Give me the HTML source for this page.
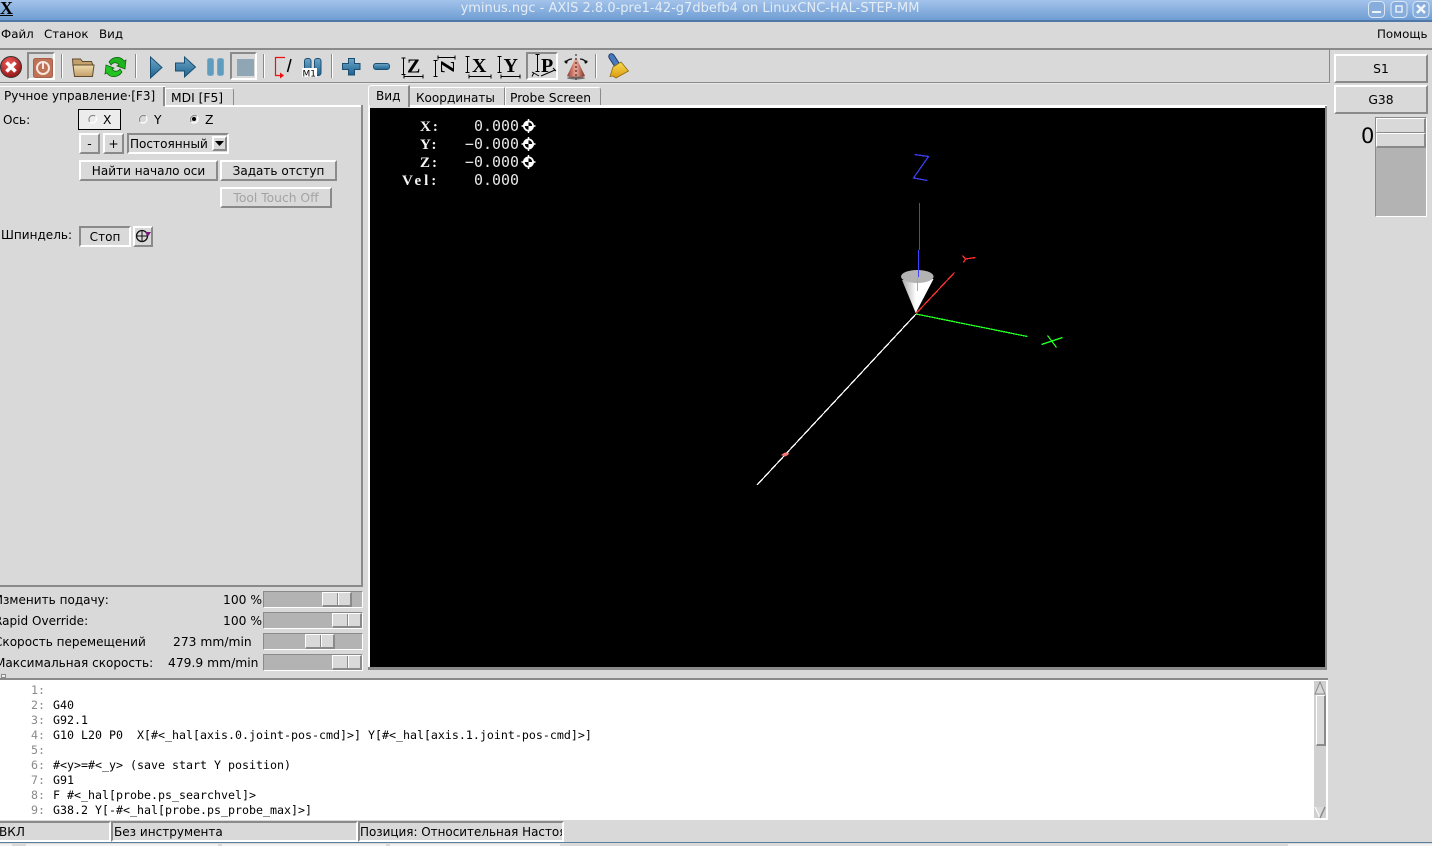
<!DOCTYPE html>
<html><head><meta charset="utf-8"><style>
html,body{margin:0;padding:0;width:1432px;height:846px;overflow:hidden;background:#d9d9d9}
body{position:relative;font-family:"DejaVu Sans","Liberation Sans",sans-serif;font-size:12.05px;color:#000}
.a{position:absolute;box-sizing:border-box}
.t{position:absolute;white-space:pre;line-height:16px;height:16px}
.l{font-size:12.3px}
.m{font-size:11.85px}
.r{position:absolute;box-sizing:border-box;border:2px solid;border-color:#fff #8a8a8a #8a8a8a #fff;background:#d9d9d9;text-align:center;white-space:pre}
.s{position:absolute;box-sizing:border-box;border:2px solid;border-color:#8a8a8a #fff #fff #8a8a8a;background:#d9d9d9;white-space:pre}
.tr{position:absolute;box-sizing:border-box;border:1px solid;border-color:#8a8a8a #fff #fff #8a8a8a;background:#b3b3b3}
.th{position:absolute;box-sizing:border-box;top:0;height:15px;width:30px;background:linear-gradient(90deg,#d9d9d9 0,#d9d9d9 14px,#8a8a8a 14px,#8a8a8a 15px,#fff 15px,#fff 16px,#d9d9d9 16px);border:1px solid;border-color:#fff #8a8a8a #8a8a8a #fff;border-width:1px 2px 2px 1px}
.code{position:absolute;left:0;font-family:"DejaVu Sans Mono","Liberation Mono",monospace;font-size:11.63px;line-height:15px;height:15px;white-space:pre}
.hud{position:absolute;font-family:"Liberation Serif",serif;font-weight:bold;font-size:15px;line-height:18px;color:#f4f4f4;white-space:pre;letter-spacing:2px}
.val{position:absolute;font-family:"DejaVu Sans Mono",monospace;font-size:14.95px;line-height:18px;color:#e8e8e8;white-space:pre;text-align:right;width:90px;left:429px}
svg{position:absolute;overflow:visible}
</style></head><body>

<!-- Title bar -->
<div class="a" style="left:0;top:0;width:1432px;height:20px;background:linear-gradient(#a3c3ea,#6f9dd3)"></div>
<div class="a" style="left:0;top:20px;width:1432px;height:2px;background:#4f77a8"></div>
<div class="t" style="left:0;top:0;font:bold 18px/17px 'Liberation Serif',serif;text-decoration:underline;height:18px">X</div>
<div class="t" style="left:440px;top:1px;width:500px;color:#e4ecf5;font-size:13px;text-align:center">yminus.ngc - AXIS 2.8.0-pre1-42-g7dbefb4 on LinuxCNC-HAL-STEP-MM</div>
<svg style="left:0;top:0" width="1432" height="22">
<g fill="#86addb" stroke="#dbe7f5" stroke-width="1">
<rect x="1368.5" y="1.5" width="16" height="16" rx="4"/><rect x="1391" y="1.5" width="16" height="16" rx="4"/><rect x="1413" y="1.5" width="16" height="16" rx="4"/></g>
<rect x="1372" y="11" width="9" height="2" fill="#eef4fb"/>
<rect x="1396" y="6" width="6" height="6" fill="none" stroke="#eef4fb" stroke-width="1.4"/>
<path d="M1417 5l8 8M1425 5l-8 8" stroke="#f2f6fb" stroke-width="2.6"/>
</svg>

<!-- Menu -->
<div class="t m" style="left:1px;top:26px">Файл</div>
<div class="t m" style="left:44px;top:26px">Станок</div>
<div class="t m" style="left:99px;top:26px">Вид</div>
<div class="t m" style="left:1377px;top:26px">Помощь</div>
<div class="a" style="left:0;top:48px;width:1432px;height:2px;background:#8a8a8a"></div>
<div class="a" style="left:0;top:50px;width:1330px;height:33px;border-right:1px solid #8a8a8a;border-bottom:1px solid #8a8a8a"></div>
<div class="a" style="left:0;top:83px;width:1330px;height:1px;background:#fff;opacity:.4"></div>

<!-- Toolbar sunken -->
<div class="s" style="left:27px;top:52px;width:28px;height:28px"></div>
<div class="s" style="left:230px;top:52px;width:27px;height:28px"></div>
<div class="s" style="left:526px;top:52px;width:32px;height:28px"></div>

<svg style="left:0;top:0" width="1432" height="90">
<defs>
<linearGradient id="b" x1="0" y1="0" x2="0" y2="1"><stop offset="0" stop-color="#6ea6c8"/><stop offset="1" stop-color="#1d6390"/></linearGradient>
<radialGradient id="rd" cx=".4" cy=".3" r=".8"><stop offset="0" stop-color="#f05a5a"/><stop offset="1" stop-color="#8a0d0d"/></radialGradient>
<linearGradient id="fo" x1="0" y1="0" x2="0" y2="1"><stop offset="0" stop-color="#f0dcae"/><stop offset="1" stop-color="#c49e68"/></linearGradient>
<linearGradient id="co" x1="0" y1="0" x2="1" y2="0"><stop offset="0" stop-color="#8f3a30"/><stop offset=".5" stop-color="#f2a898"/><stop offset="1" stop-color="#7a2e26"/></linearGradient>
<linearGradient id="by" x1="0" y1="0" x2="0" y2="1"><stop offset="0" stop-color="#f8dc50"/><stop offset="1" stop-color="#dc9a10"/></linearGradient>
</defs>
<!-- separators -->
<g fill="#8a8a8a"><rect x="61" y="54" width="1" height="24"/><rect x="135" y="54" width="1" height="24"/><rect x="263" y="54" width="1" height="24"/><rect x="331" y="54" width="1" height="24"/><rect x="595" y="54" width="1" height="24"/></g>
<g fill="#fff"><rect x="62" y="54" width="1" height="24"/><rect x="136" y="54" width="1" height="24"/><rect x="264" y="54" width="1" height="24"/><rect x="332" y="54" width="1" height="24"/><rect x="596" y="54" width="1" height="24"/></g>
<!-- estop -->
<circle cx="11" cy="67" r="10.5" fill="url(#rd)" stroke="#333" stroke-width="1"/>
<path d="M6.5 62.5l9 9M15.5 62.5l-9 9" stroke="#fff" stroke-width="3.6"/>
<!-- power -->
<rect x="33.500" y="58.500" width="19" height="19" rx="2" fill="#bf7255" stroke="#a86048"/>
<circle cx="43" cy="68" r="6" fill="none" stroke="#f6e8e0" stroke-width="2"/>
<rect x="42" y="62" width="2" height="7" fill="#f6e8e0"/>
<!-- folder -->
<path d="M72.5 59h8l2 2.500h9l1.500 4H73z" fill="#c4a06a" stroke="#5e4c30"/>
<path d="M73 65h21l-1.500 11.500H74.500z" fill="url(#fo)" stroke="#5e4c30"/>
<!-- reload -->
<path d="M109 62c4-6 12-6 15-1l2-1-1 9-8-3 2-1c-2-3-6-3-8 0z" fill="#1fb41f" stroke="#0b5b0b" stroke-width=".7"/>
<path d="M122 72c-4 6-12 6-15 1l-2 1 1-9 8 3-2 1c2 3 6 3 8 0z" fill="#22c422" stroke="#0b5b0b" stroke-width=".7"/>
<!-- run -->
<path d="M150.5 57l11.5 10.5-11.500 10.500z" fill="url(#b)" stroke="#1b4f72"/>
<!-- step -->
<path d="M175.5 63h9v-6l11 10-11 10v-6h-9z" fill="url(#b)" stroke="#1b4f72"/>
<!-- pause -->
<rect x="207.5" y="58.5" width="6" height="17" rx="2" fill="#5f9cbe" stroke="#7aa9c4"/>
<rect x="217.5" y="58.5" width="6" height="17" rx="2" fill="#5f9cbe" stroke="#7aa9c4"/>
<!-- stop -->
<rect x="237" y="59" width="17" height="17" fill="#8fa6b4"/>
<!-- touch-off run-from -->
<path d="M285 57.500h-9.500v18h8" fill="none" stroke="#f01010" stroke-width="1.200"/>
<path d="M280 72.500l4 3-4 3z" fill="#f01010"/>
<path d="M291 59l-3.500 13" stroke="#000" stroke-width="1.500"/>
<!-- M1 -->
<rect x="304.500" y="58.500" width="6.500" height="17" rx="2.500" fill="url(#b)" stroke="#1b4f72"/>
<rect x="314.500" y="58.500" width="6.500" height="17" rx="2.500" fill="url(#b)" stroke="#1b4f72"/>
<rect x="302" y="68" width="15" height="9" fill="#fff"/>
<text x="302.500" y="76.500" font-family="DejaVu Sans" font-size="9" fill="#000">M1</text>
<!-- plus / minus -->
<path d="M348.500 58.500h6v5h5.500v6h-5.500v5.500h-6v-5.500h-6v-6h6z" fill="url(#b)" stroke="#1b4f72"/>
<rect x="373.500" y="63.500" width="16" height="6" rx="2.500" fill="url(#b)" stroke="#1b4f72"/>
<!-- view brackets -->
<g stroke="#000" fill="none" stroke-width="1">
<path d="M403.500 58v17M401.500 58h4M401.500 74.500h4M404 76.500h19M404 74.500v4M423 74.500v4"/>
<path d="M435.500 60v17M433.500 60.500h4M433.500 76.500h4M438 57.500h17M438 55.500v4M455 55.500v4"/>
<path d="M467.500 56v17M465.500 56.500h4M465.500 72.500h4M469 76.500h22M469 74.500v4M491 74.500v4"/>
<path d="M499.500 56v17M497.500 56.500h4M497.500 72.500h4M501 76.500h19M501 74.500v4M520 74.500v4"/>
<path d="M537.500 54v18M535.500 54.500h4M535.500 71.500h4M532 72l7 4M532 76.500l2-4M541 76l14-6M553 68l3 3"/>
</g>
<text x="407" y="72.500" font-family="Liberation Serif" font-weight="bold" font-size="20">Z</text>
<text x="0" y="0" transform="translate(440 60.500) rotate(90) translate(0 -1) scale(1 1.050)" font-family="Liberation Serif" font-weight="bold" font-size="19">Z</text>
<text x="472" y="72" font-family="Liberation Serif" font-weight="bold" font-size="20">X</text>
<text x="503.500" y="72" font-family="Liberation Serif" font-weight="bold" font-size="20">Y</text>
<text x="541" y="72" font-family="Liberation Serif" font-weight="bold" font-size="20">P</text>
<!-- cone -->
<path d="M576 57l-9 19q9 4 18 0z" fill="url(#co)"/>
<path d="M565 63q3-4 7-4M587 63q-3-4-7-4" stroke="#111" fill="none" stroke-width="1.200"/>
<path d="M564 61l3 3 1-4zM588 61l-3 3-1-4z" fill="#111"/>
<path d="M576 54v26" stroke="#111" stroke-width="1" stroke-dasharray="2 2"/>
<ellipse cx="576" cy="78" rx="9" ry="1.500" fill="#444" opacity=".7"/>
<!-- sweep -->
<path d="M611.500 56.500L618 66.500" stroke="#1e3a6a" stroke-width="6.500" stroke-linecap="round"/>
<path d="M611.500 56.500L618 66.500" stroke="#4a78bc" stroke-width="4.500" stroke-linecap="round"/>
<path d="M613 67l8-5 7.500 9-12.500 7-3-2-3 .5z" fill="url(#by)" stroke="#8a6a10" stroke-width=".8"/>
</svg>

<!-- Left tabs -->
<div class="a" style="left:0;top:86px;width:165px;height:21px;background:#d9d9d9;border-top:1px solid #fff"></div>
<div class="a" style="left:163px;top:87px;width:2px;height:19px;background:#8a8a8a"></div>
<div class="t" style="left:4px;top:88px">Ручное управление·[F3]</div>
<div class="a" style="left:165px;top:88px;width:69px;height:18px;border-top:1px solid #fff;border-left:1px solid #fff;border-right:1px solid #8a8a8a;border-top-right-radius:3px"></div>
<div class="t l" style="left:171px;top:90px">MDI [F5]</div>
<div class="a" style="left:165px;top:105px;width:198px;height:2px;background:#fff"></div>
<div class="a" style="left:361px;top:105px;width:2px;height:482px;background:#8a8a8a"></div>
<div class="a" style="left:0;top:585px;width:363px;height:2px;background:#8a8a8a"></div>

<!-- Axis -->
<div class="t" style="left:3px;top:112px;font-size:12px">Ось:</div>
<div class="a" style="left:78px;top:109px;width:43px;height:21px;background:#ececec;border:1px solid #000"></div>
<svg style="left:0;top:0" width="240" height="130">
<g fill="none" stroke-width="1.200">
<circle cx="92.500" cy="119" r="4" stroke="#fff"/><path d="M89.700 121.800a4 4 0 0 1 5.600-5.600" stroke="#8a8a8a"/>
<circle cx="143" cy="119" r="4" stroke="#fff"/><path d="M140.200 121.800a4 4 0 0 1 5.600-5.600" stroke="#8a8a8a"/>
<circle cx="194" cy="119" r="4" stroke="#fff"/><path d="M191.200 121.800a4 4 0 0 1 5.600-5.600" stroke="#8a8a8a"/>
</g>
<circle cx="194" cy="119" r="2" fill="#000"/>
</svg>
<div class="t l" style="left:103px;top:112px">X</div>
<div class="t l" style="left:154px;top:112px">Y</div>
<div class="t l" style="left:205px;top:112px">Z</div>

<div class="r l" style="left:79px;top:133px;width:21px;height:21px;line-height:19px">-</div>
<div class="r l" style="left:103px;top:133px;width:21px;height:21px;line-height:19px">+</div>
<div class="s" style="left:127px;top:133px;width:102px;height:21px;line-height:19px;padding-left:1px">Постоянный</div>
<div class="r" style="left:212px;top:136px;width:15px;height:15px"></div>
<svg style="left:0;top:0" width="240" height="160"><path d="M215 141h9l-4.500 5z" fill="#000"/></svg>

<div class="r" style="left:79px;top:160px;width:139px;height:21px;line-height:19px">Найти начало оси</div>
<div class="r" style="left:220px;top:160px;width:117px;height:21px;line-height:19px">Задать отступ</div>
<div class="r l" style="left:220px;top:187px;width:112px;height:21px;line-height:19px;color:#a3a3a3">Tool Touch Off</div>

<div class="t" style="left:1px;top:227px">Шпиндель:</div>
<div class="s" style="left:79px;top:226px;width:52px;height:21px;line-height:19px;text-align:center">Стоп</div>
<div class="r" style="left:133px;top:226px;width:20px;height:21px"></div>
<svg style="left:0;top:0" width="160" height="250">
<circle cx="142" cy="236" r="5.500" fill="none" stroke="#111" stroke-width="1.300"/>
<path d="M136 236h11M142 231v10" stroke="#111" stroke-width="1"/>
<path d="M145 232h6l-3 4.500z" fill="#7a1a7a"/>
</svg>

<!-- Sliders -->
<div class="t" style="left:-6px;top:592px">Изменить подачу:</div>
<div class="t" style="left:-6px;top:613px">Rapid Override:</div>
<div class="t" style="left:-6px;top:634px">Скорость перемещений</div>
<div class="t" style="left:-5px;top:655px">Максимальная скорость:</div>
<div class="t l" style="left:223px;top:592px">100 %</div>
<div class="t l" style="left:223px;top:613px">100 %</div>
<div class="t l" style="left:173px;top:634px">273 mm/min</div>
<div class="t l" style="left:168px;top:655px">479.9 mm/min</div>
<div class="tr" style="left:263px;top:591px;width:100px;height:17px"><div class="th" style="left:58px"></div></div>
<div class="tr" style="left:263px;top:612px;width:100px;height:17px"><div class="th" style="left:68px"></div></div>
<div class="tr" style="left:263px;top:633px;width:100px;height:17px"><div class="th" style="left:41px"></div></div>
<div class="tr" style="left:263px;top:654px;width:100px;height:17px"><div class="th" style="left:68px"></div></div>

<!-- Right tabs -->
<div class="a" style="left:368px;top:85px;width:42px;height:22px;border-top:1px solid #fff;border-left:1px solid #fff;border-right:2px solid #8a8a8a;border-top-left-radius:3px"></div>
<div class="t" style="left:376px;top:88px">Вид</div>
<div class="a" style="left:410px;top:87px;width:95px;height:19px;border-top:1px solid #fff;border-right:1px solid #8a8a8a"></div>
<div class="t" style="left:416px;top:90px">Координаты</div>
<div class="a" style="left:505px;top:87px;width:96px;height:19px;border-top:1px solid #fff;border-left:1px solid #fff;border-right:1px solid #8a8a8a;border-top-right-radius:3px"></div>
<div class="t l" style="left:510px;top:90px">Probe Screen</div>
<div class="a" style="left:410px;top:105px;width:917px;height:3px;background:#fff"></div>
<div class="a" style="left:368px;top:105px;width:2px;height:565px;background:#fff"></div>
<div class="a" style="left:1325px;top:106px;width:2px;height:564px;background:#8a8a8a"></div>
<div class="a" style="left:368px;top:667px;width:959px;height:3px;background:#8a8a8a"></div>

<!-- Canvas -->
<div class="a" style="left:370px;top:108px;width:955px;height:559px;background:#000"></div>
<div class="hud" style="left:420px;top:118px">X:</div>
<div class="hud" style="left:420px;top:136px">Y:</div>
<div class="hud" style="left:420px;top:154px">Z:</div>
<div class="hud" style="left:402px;top:172px;letter-spacing:3px">Vel:</div>
<div class="val" style="top:117px">0.000</div>
<div class="val" style="top:135px">−0.000</div>
<div class="val" style="top:153px">−0.000</div>
<div class="val" style="top:171px">0.000</div>
<svg style="left:0;top:0" width="1432" height="846">
<g>
<path d="M521.500 126h14M528.500 119v14" stroke="#fff" stroke-width="1.500"/><circle cx="528.500" cy="126" r="5.500" fill="#fff"/><path d="M528.500 126v-3.700a3.700 3.700 0 0 1 3.700 3.700zM528.500 126v3.700a3.700 3.700 0 0 1-3.700-3.700z" fill="#000"/>
</g>
<g transform="translate(0 18)"><path d="M521.500 126h14M528.500 119v14" stroke="#fff" stroke-width="1.500"/><circle cx="528.500" cy="126" r="5.500" fill="#fff"/><path d="M528.500 126v-3.700a3.700 3.700 0 0 1 3.700 3.700zM528.500 126v3.700a3.700 3.700 0 0 1-3.700-3.700z" fill="#000"/></g>
<g transform="translate(0 36)"><path d="M521.500 126h14M528.500 119v14" stroke="#fff" stroke-width="1.500"/><circle cx="528.500" cy="126" r="5.500" fill="#fff"/><path d="M528.500 126v-3.700a3.700 3.700 0 0 1 3.700 3.700zM528.500 126v3.700a3.700 3.700 0 0 1-3.700-3.700z" fill="#000"/></g>

<!-- cone -->
<defs><linearGradient id="cg" x1="0" y1="0" x2="1" y2="0"><stop offset="0" stop-color="#a8a8a8"/><stop offset=".45" stop-color="#fff"/><stop offset="1" stop-color="#fff"/></linearGradient></defs>
<path d="M902 280L933.500 279L915.700 313z" fill="url(#cg)"/>
<ellipse cx="917.300" cy="276.500" rx="16.300" ry="6.500" fill="#b3b3b3"/>
<rect x="919" y="203" width="1" height="21" fill="#4040ff"/>
<rect x="919" y="224" width="1" height="26" fill="#4040ff"/>
<rect x="918" y="250" width="1" height="27" fill="#4040ff"/>
<rect x="917" y="277" width="1" height="14" fill="#a0a0e8"/>
<g shape-rendering="crispEdges" fill="none" stroke-width="1.300">
<path d="M914.500 154.500L928.500 156.500L913.500 178L927.500 180.500" stroke="#3c3cf0"/>
<path d="M954.500 272.500L916 313.500" stroke="#ff3030"/>
<path d="M962.500 255.500L965.500 259L963.500 262.500M965.500 259L975.500 257.500" stroke="#ff3030"/>
<path d="M916 314L1027.500 336.500" stroke="#20ff20"/>
<path d="M1041.500 344.500L1062.500 337.500M1047.500 335.500L1056.500 347.500" stroke="#20ff20"/>
<path d="M916 314L757 485" stroke="#fff"/>
</g>
<path d="M781 455l4-2.500 4 .5-1 2-3 1.500z" fill="#ff7a7a"/>
</svg>

<!-- Right column -->
<div class="r l" style="left:1334px;top:54px;width:94px;height:29px;line-height:26px">S1</div>
<div class="r l" style="left:1334px;top:85px;width:94px;height:29px;line-height:26px">G38</div>
<div class="t" style="left:1361px;top:124px;font-size:21px;line-height:25px;height:25px">0</div>
<div class="tr" style="left:1375px;top:117px;width:52px;height:100px"></div>
<div class="a" style="left:1376px;top:118px;width:50px;height:15px;background:#d9d9d9;border:1px solid;border-color:#fff #8a8a8a #8a8a8a #fff;border-width:1px 2px 1px 1px"></div>
<div class="a" style="left:1376px;top:133px;width:50px;height:15px;background:#d9d9d9;border:1px solid;border-color:#fff #8a8a8a #8a8a8a #fff;border-width:1px 2px 2px 1px"></div>

<!-- grip and text -->
<div class="a" style="left:1px;top:674px;width:5px;height:4px;border:1px solid #8a8a8a;background:#eee"></div>
<div class="a" style="left:0;top:678px;width:1328px;height:2px;background:#8a8a8a"></div>
<div class="a" style="left:0;top:680px;width:1328px;height:140px;background:#fff"></div>
<div class="code" style="left:24px;top:683px;color:#8a8a8a"> 1:</div>
<div class="code" style="left:24px;top:698px;color:#8a8a8a"> 2:</div><div class="code" style="left:53px;top:698px">G40</div>
<div class="code" style="left:24px;top:713px;color:#8a8a8a"> 3:</div><div class="code" style="left:53px;top:713px">G92.1</div>
<div class="code" style="left:24px;top:728px;color:#8a8a8a"> 4:</div><div class="code" style="left:53px;top:728px">G10 L20 P0  X[#&lt;_hal[axis.0.joint-pos-cmd]&gt;] Y[#&lt;_hal[axis.1.joint-pos-cmd]&gt;]</div>
<div class="code" style="left:24px;top:743px;color:#8a8a8a"> 5:</div>
<div class="code" style="left:24px;top:758px;color:#8a8a8a"> 6:</div><div class="code" style="left:53px;top:758px">#&lt;y&gt;=#&lt;_y&gt; (save start Y position)</div>
<div class="code" style="left:24px;top:773px;color:#8a8a8a"> 7:</div><div class="code" style="left:53px;top:773px">G91</div>
<div class="code" style="left:24px;top:788px;color:#8a8a8a"> 8:</div><div class="code" style="left:53px;top:788px">F #&lt;_hal[probe.ps_searchvel]&gt;</div>
<div class="code" style="left:24px;top:803px;color:#8a8a8a"> 9:</div><div class="code" style="left:53px;top:803px">G38.2 Y[-#&lt;_hal[probe.ps_probe_max]&gt;]</div>

<!-- Scrollbar -->
<div class="a" style="left:1314px;top:681px;width:12px;height:137px;background:#d0d0d0"></div>
<div class="a" style="left:1316px;top:695px;width:10px;height:51px;background:#d9d9d9;border:1px solid;border-color:#fff #8a8a8a #8a8a8a #fff;border-width:1px 2px 2px 1px"></div>
<svg style="left:0;top:0" width="1432" height="846">
<path d="M1320 682l5 12h-10z" fill="#d9d9d9" stroke="#8a8a8a"/>
<path d="M1315 807l5 11 5-11" fill="#d9d9d9" stroke="#fff"/><path d="M1325 807l-5 11" stroke="#8a8a8a" stroke-width="1.500"/>
</svg>

<!-- Status -->
<div class="s" style="left:-3px;top:821px;width:114px;height:21px;line-height:19px;padding-left:0">ВКЛ</div>
<div class="s" style="left:111px;top:821px;width:247px;height:21px;line-height:19px;padding-left:1px">Без инструмента</div>
<div class="s" style="left:358px;top:821px;width:206px;height:21px;line-height:19px;padding-left:0;overflow:hidden;border-right-color:#fff;font-size:11.95px">Позиция: Относительная Настоящая</div>

<!-- Bottom strip -->
<div class="a" style="left:0;top:842px;width:1432px;height:1px;background:#5d7f9f"></div>
<div class="a" style="left:0;top:843px;width:1432px;height:3px;background:#d9d9d9"></div>
<div class="a" style="left:0;top:844px;width:12px;height:2px;background:#f2f2f2"></div>
<div class="a" style="left:26px;top:844px;width:192px;height:2px;background:#f2f2f2"></div>
<div class="a" style="left:222px;top:844px;width:164px;height:2px;background:#f2f2f2"></div>
<div class="a" style="left:390px;top:844px;width:170px;height:2px;background:#f2f2f2"></div>
<div class="a" style="left:1288px;top:844px;width:144px;height:2px;background:#f2f2f2"></div>
</body></html>
